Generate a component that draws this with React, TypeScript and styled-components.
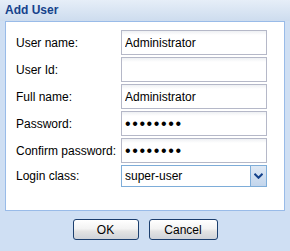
import styled, { createGlobalStyle } from 'styled-components'

const GlobalStyle = createGlobalStyle`
  html, body {
    margin: 0;
    padding: 0;
    background: #cfdff3;
  }
  * {
    box-sizing: border-box;
  }
`

const Window = styled.div`
  width: 290px;
  height: 251px;
  background: #cfdff3;
  font-family: 'Liberation Sans', Arial, sans-serif;
  font-size: 12px;
  color: #000;
  display: flex;
  flex-direction: column;
`

const Header = styled.div`
  height: 21px;
  padding: 3px 5px 0;
  background: linear-gradient(#e6eef8, #cddcee);
  color: #15428b;
  font-weight: bold;
  font-size: 12px;
  line-height: 15px;
`

const Body = styled.div`
  margin: 0 5px;
  height: 190px;
  background: #fff;
  border: 1px solid #99bbe8;
  padding: 8px 0 0 10px;
  display: flex;
  flex-direction: column;
  gap: 2px;
`

const Row = styled.div<{ $height?: number }>`
  display: flex;
  align-items: center;
  height: ${(p) => p.$height ?? 25}px;
`

const Label = styled.label`
  width: 105px;
  white-space: nowrap;
`

const TextField = styled.input`
  width: 146px;
  height: 100%;
  border: 1px solid #b5b8c8;
  background: linear-gradient(#eef0f3, #fff 4px);
  padding: 0 3px;
  font-family: 'Liberation Sans', Arial, sans-serif;
  font-size: 12px;
  color: #000;
  outline: none;
  &[type='password'] {
    font-size: 16px;
    letter-spacing: 1.6px;
  }
`

const Combo = styled.div`
  display: flex;
  width: 146px;
  height: 100%;
`

const ComboInput = styled.div`
  flex: 1;
  border: 1px solid #7eadd9;
  border-right: none;
  background: #fff;
  padding: 0 3px;
  display: flex;
  align-items: center;
`

const Trigger = styled.div`
  width: 17px;
  border: 1px solid #7eadd9;
  background: linear-gradient(#dfe9f5, #c2d5ec);
  display: flex;
  align-items: center;
  justify-content: center;
`

const Footer = styled.div`
  display: flex;
  justify-content: center;
  gap: 10px;
  padding-top: 8px;
`

const Button = styled.button<{ $width: number }>`
  width: ${(p) => p.$width}px;
  height: 21px;
  border: 1px solid #1c3f6e;
  border-radius: 3px;
  background: linear-gradient(#ffffff 0%, #f3f3f3 45%, #e3e3e3 60%, #cfd3d9 100%);
  font-family: 'Liberation Sans', Arial, sans-serif;
  font-size: 12px;
  color: #000;
  padding: 0;
`

const Arrow = () => (
  <svg width="9" height="6" viewBox="0 0 9 6">
    <path d="M0.5 0.8 L4.5 4.8 L8.5 0.8" fill="none" stroke="#15428b" strokeWidth="2" />
  </svg>
)

const App = () => {
  return (
    <Window>
      <GlobalStyle />
      <Header>Add User</Header>
      <Body>
        <Row>
          <Label>User name:</Label>
          <TextField defaultValue="Administrator" />
        </Row>
        <Row>
          <Label>User Id:</Label>
          <TextField defaultValue="" />
        </Row>
        <Row>
          <Label>Full name:</Label>
          <TextField defaultValue="Administrator" />
        </Row>
        <Row>
          <Label>Password:</Label>
          <TextField type="password" defaultValue="password" />
        </Row>
        <Row>
          <Label>Confirm password:</Label>
          <TextField type="password" defaultValue="password" />
        </Row>
        <Row $height={22}>
          <Label>Login class:</Label>
          <Combo>
            <ComboInput>super-user</ComboInput>
            <Trigger>
              <Arrow />
            </Trigger>
          </Combo>
        </Row>
      </Body>
      <Footer>
        <Button $width={66}>OK</Button>
        <Button $width={69}>Cancel</Button>
      </Footer>
    </Window>
  )
}

export default App
